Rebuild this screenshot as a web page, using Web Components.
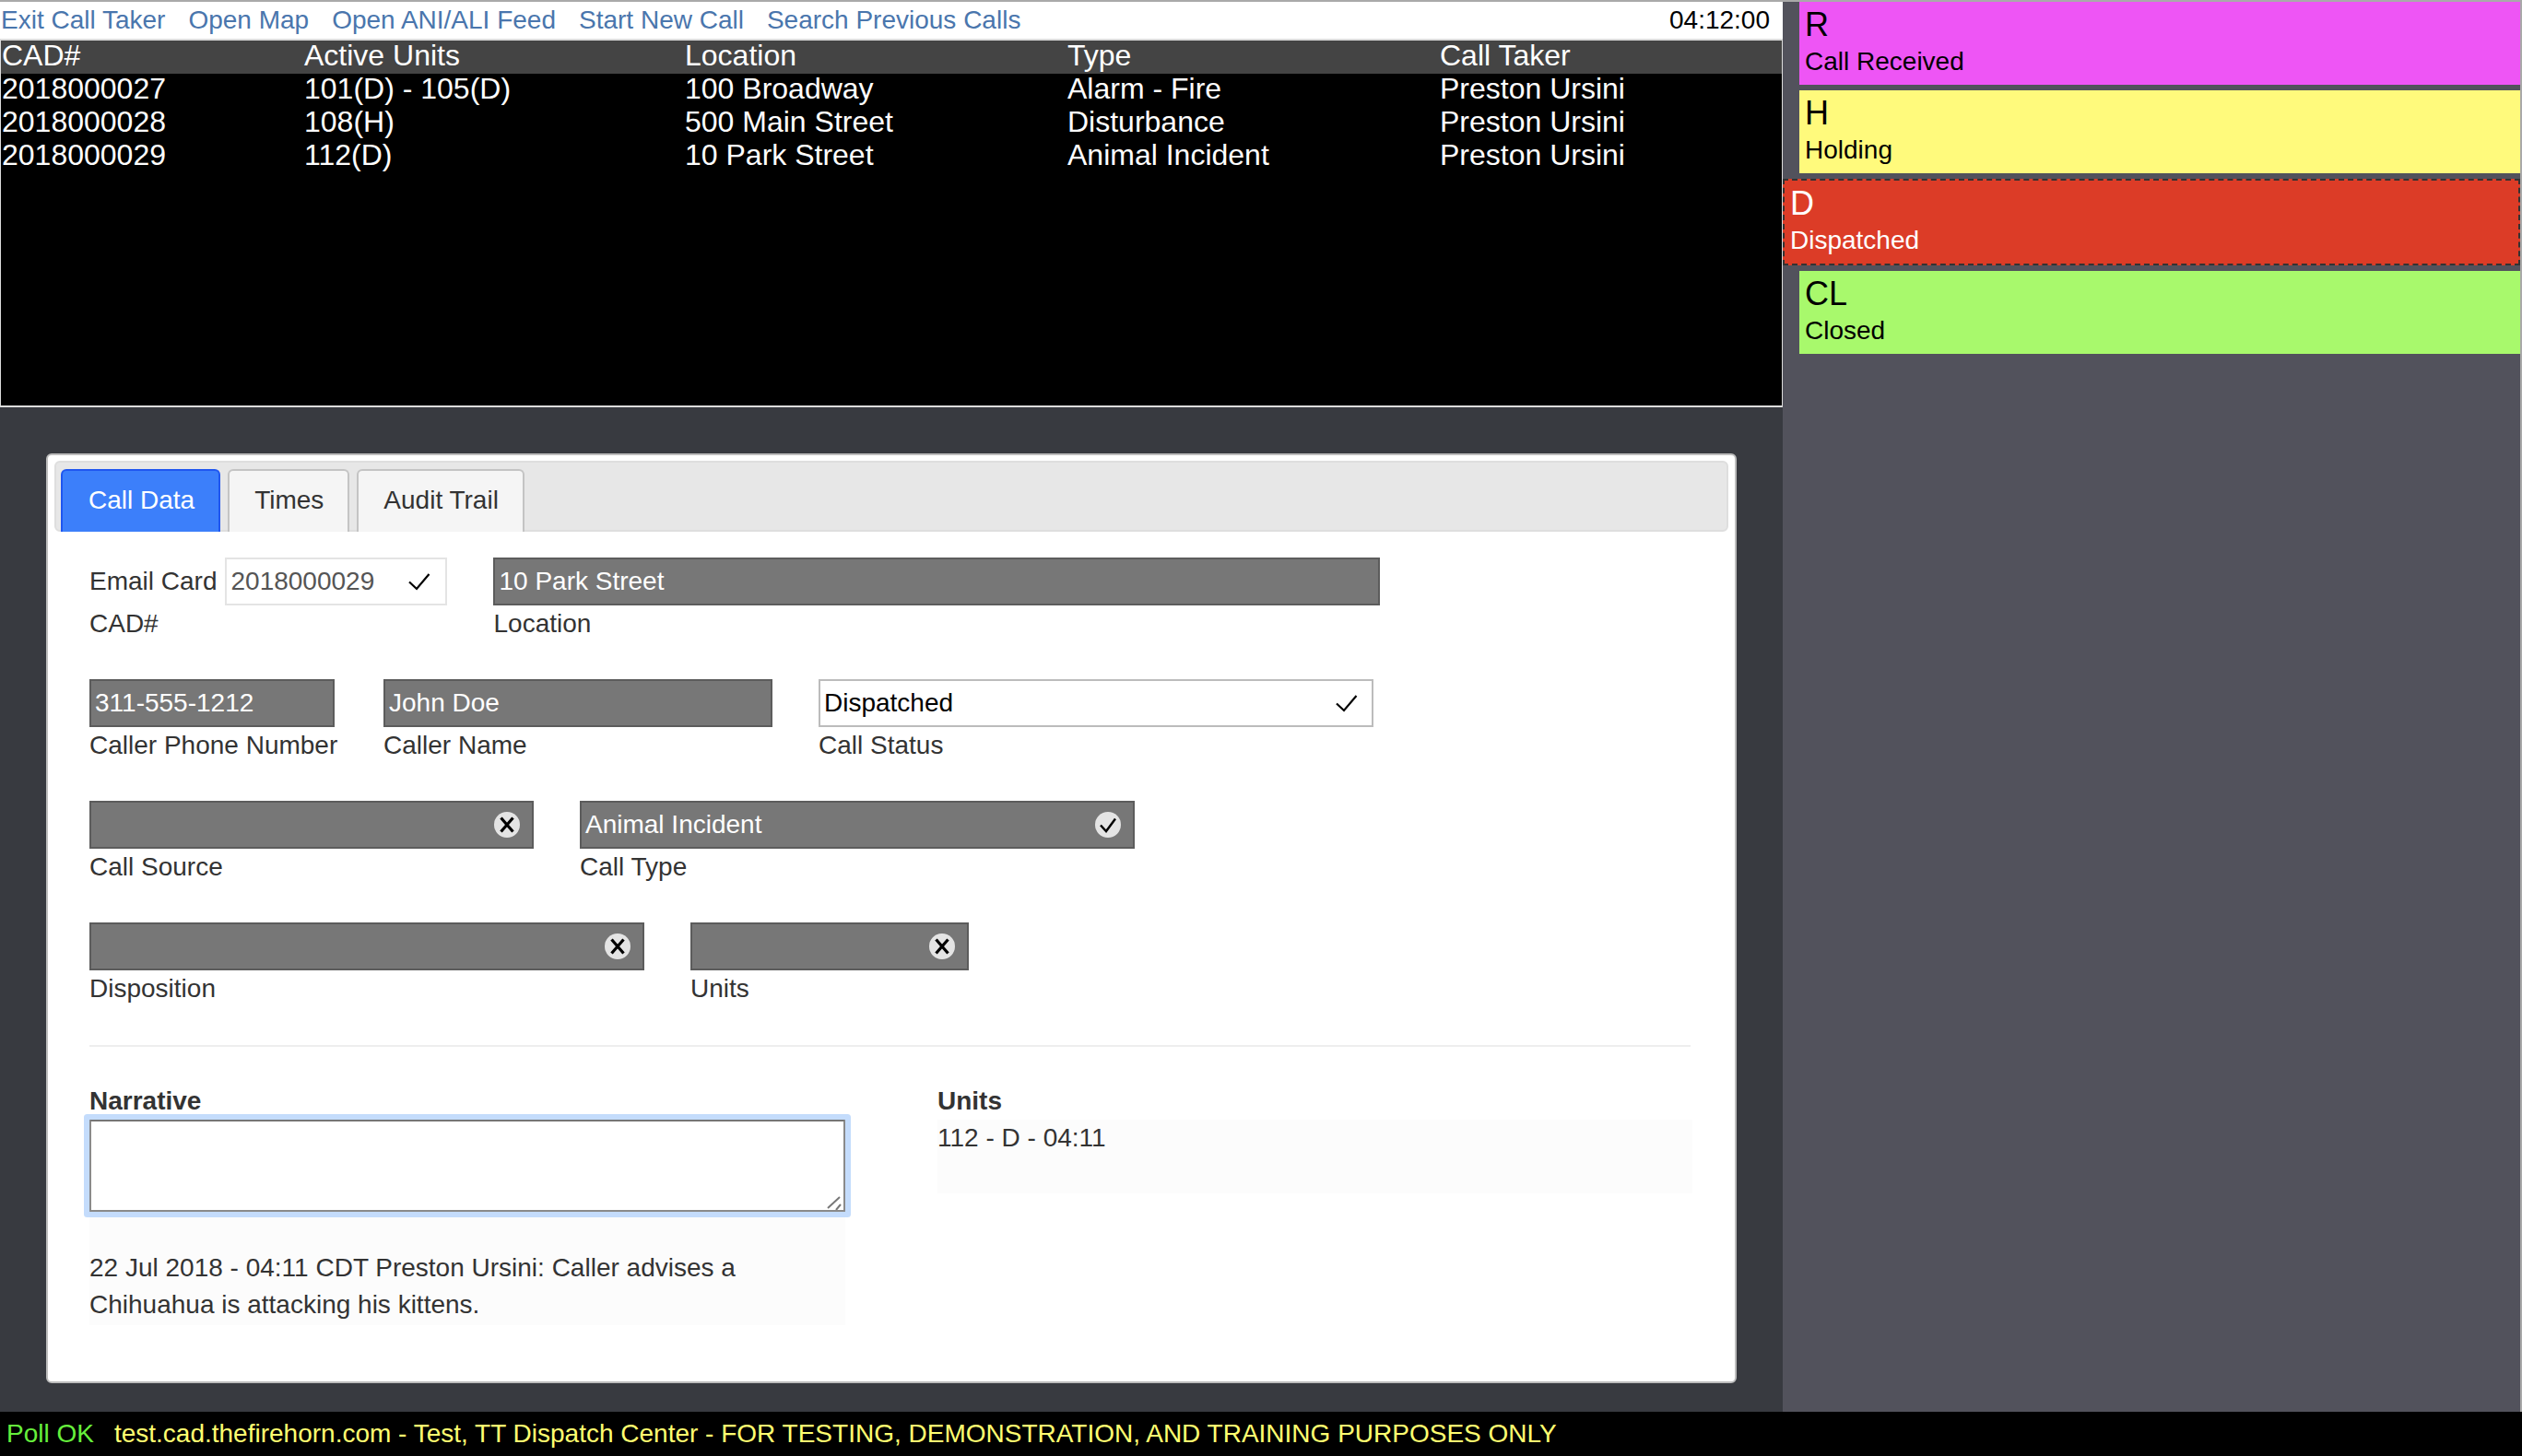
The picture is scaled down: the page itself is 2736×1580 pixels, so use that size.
<!DOCTYPE html>
<html lang="en">
<head>
<meta charset="utf-8">
<title>Call Taker</title>
<style>
  html, body { margin: 0; padding: 0; height: 100%; overflow: hidden; }
  body { font-family: "Liberation Sans", Arial, sans-serif; font-size: 28px; background: #383a40; }
</style>
</head>
<body>
<cad-shell>
  <call-board slot="board"></call-board>
  <call-card slot="main"></call-card>
  <status-card slot="side" code="R" name="Call Received" style="--bg:#ee55f5;--fg:#000"></status-card>
  <status-card slot="side" code="H" name="Holding" style="--bg:#fffa7c;--fg:#000"></status-card>
  <status-card slot="side" code="D" name="Dispatched" selected style="--bg:#dc3c27;--fg:#fff"></status-card>
  <status-card slot="side" code="CL" name="Closed" style="--bg:#a8f96c;--fg:#000"></status-card>
  <status-line slot="foot"></status-line>
</cad-shell>

<script>
const icons = {
  check: '<svg width="24" height="20" viewBox="0 0 24 20"><path d="M1 10.500 9 18 22.500 2" fill="none" stroke="#000" stroke-width="2.200"/></svg>',
  okay: '<svg width="28" height="28" viewBox="0 0 28 28"><circle cx="14" cy="14" r="14" fill="#e4e4e4"/><path d="M6 14.500 12 21 22 7.500" fill="none" stroke="#000" stroke-width="2.400"/></svg>',
  clear: '<svg width="28" height="28" viewBox="0 0 28 28"><circle cx="14" cy="14" r="14" fill="#e4e4e4"/><path d="M7.500 6.500 20.500 21.500M20.500 6.500 7.500 21.500" fill="none" stroke="#000" stroke-width="3.200"/></svg>'
};

class CadShell extends HTMLElement {
  constructor() {
    super();
    this.attachShadow({ mode: 'open' });
    this.shadowRoot.innerHTML = `
      <style>
        :host { display: grid; grid-template-columns: 1934px 1fr; grid-template-rows: 1530px 48px; height: 1580px; box-sizing: border-box; border-top: 2px solid #a9a9a9; }
        .left { display: flex; flex-direction: column; background: #383a40; min-width: 0; }
        .side { display: flex; flex-direction: column; gap: 6px; background: #52525c; border-right: 2px solid #a9a9a9; }
        .foot { grid-column: 1 / -1; }
      </style>
      <div class="left"><slot name="board"></slot><slot name="main"></slot></div>
      <div class="side"><slot name="side"></slot></div>
      <div class="foot"><slot name="foot"></slot></div>
    `;
  }
}

class CallBoard extends HTMLElement {
  constructor() {
    super();
    this.attachShadow({ mode: 'open' });
    const heads = ['CAD#', 'Active Units', 'Location', 'Type', 'Call Taker'];
    const calls = [
      ['2018000027', '101(D) - 105(D)', '100 Broadway', 'Alarm - Fire', 'Preston Ursini'],
      ['2018000028', '108(H)', '500 Main Street', 'Disturbance', 'Preston Ursini'],
      ['2018000029', '112(D)', '10 Park Street', 'Animal Incident', 'Preston Ursini']
    ];
    const links = ['Exit Call Taker', 'Open Map', 'Open ANI/ALI Feed', 'Start New Call', 'Search Previous Calls'];
    this.shadowRoot.innerHTML = `
      <style>
        :host { display: block; height: 440px; box-sizing: border-box; }
        nav { display: flex; align-items: center; gap: 25px; height: 40px; padding: 0 14px 0 1px; background: #fff; font-size: 28px; }
        a { color: #4a76ad; text-decoration: none; }
        time { margin-left: auto; color: #000; }
        .list { box-sizing: border-box; height: 400px; background: #000; border: solid #dcdcdc; border-width: 2px 1px 2px 1px; color: #fff; font-size: 32px; line-height: 33px; }
        .row { display: grid; grid-template-columns: 328px 413px 415px 404px 1fr; height: 36px; padding-left: 1px; }
        .head { background: #444; }
      </style>
      <nav>
        ${links.map(l => `<a href="#">${l}</a>`).join('')}
        <time>04:12:00</time>
      </nav>
      <div class="list">
        <div class="row head">${heads.map(h => `<span>${h}</span>`).join('')}</div>
        ${calls.map(c => `<div class="row">${c.map(v => `<span>${v}</span>`).join('')}</div>`).join('')}
      </div>
    `;
  }
}

class StatusCard extends HTMLElement {
  constructor() {
    super();
    this.attachShadow({ mode: 'open' });
    this.shadowRoot.innerHTML = `
      <style>
        :host { display: block; height: 90px; margin-left: 18px; padding: 5px 6px 0; box-sizing: border-box; background: var(--bg); color: var(--fg); }
        :host([selected]) { height: 94px; margin-left: 0; padding: 5px 6px 0; border: 2px dashed #333; }
        .code { font-size: 36px; line-height: 40px; }
        .name { font-size: 28px; line-height: 40px; }
      </style>
      <div class="code">${this.getAttribute('code')}</div>
      <div class="name">${this.getAttribute('name')}</div>
    `;
  }
}

class TabBar extends HTMLElement {
  constructor() {
    super();
    this.attachShadow({ mode: 'open' });
    this.shadowRoot.innerHTML = `
      <style>
        :host { display: flex; gap: 8px; height: 77px; box-sizing: border-box; padding: 7px 0 0 5px; background: #e7e7e7; border: 2px solid #dedede; border-radius: 6px; }
        div { box-sizing: border-box; height: 68px; padding: 0 26px 0 27px; line-height: 64px; background: #f5f5f5; color: #333; border: 2px solid #c4c4c4; border-bottom: 0; border-radius: 6px 6px 0 0; }
        .on { background: #3c7ffa; color: #fff; border-color: #1f56f0; padding-left: 28px; }
      </style>
      <div class="on">Call Data</div>
      <div>Times</div>
      <div>Audit Trail</div>
    `;
  }
}

// one labelled box of the form; kind is ro (grey, read only) or rw (white)
class FormField extends HTMLElement {
  constructor() {
    super();
    this.attachShadow({ mode: 'open' });
    const icon = this.getAttribute('icon');
    const prefix = this.getAttribute('prefix');
    this.shadowRoot.innerHTML = `
      <style>
        :host { display: block; font-size: 28px; line-height: 40px; color: #333; white-space: nowrap; }
        .top { display: flex; align-items: center; gap: 9px; }
        .box { display: flex; align-items: center; justify-content: space-between; box-sizing: border-box; height: 52px; width: var(--w); padding: 0 var(--pr, 13px) 0 4px; }
        .ro { background: #777; border: 2px solid #5c5c5c; color: #fff; }
        .rw { background: #fff; border: 2px solid #bcbcbc; color: #000; }
        .cad { background: #fff; border: 2px solid #e4e4e4; color: #555; }
        svg { display: block; }
      </style>
      <div class="top">
        ${prefix ? `<span>${prefix}</span>` : ''}
        <div class="box ${this.getAttribute('kind')}">
          <span>${this.getAttribute('value') || ''}</span>
          ${icon ? icons[icon] : ''}
        </div>
      </div>
      <div class="label">${this.getAttribute('label')}</div>
    `;
  }
}

class CallCard extends HTMLElement {
  constructor() {
    super();
    this.attachShadow({ mode: 'open' });
    this.shadowRoot.innerHTML = `
      <style>
        :host { display: block; box-sizing: border-box; height: 1009px; margin: 50px 50px 0; padding: 6px 7px 0; background: #fff; border: 2px solid #bdbdbd; border-radius: 6px; color: #333; line-height: 40px; }
        .form { display: flex; flex-direction: column; gap: 40px; margin: 28px 41px 0 38px; }
        .line { display: flex; gap: 50px; }
        hr { height: 2px; margin: 41px 0 0; border: 0; background: #eee; }
        .notes { display: grid; grid-template-columns: 820px 819px; column-gap: 100px; margin-top: 39px; }
        b { display: block; }
        .entry { position: relative; height: 100px; }
        .entry svg { position: absolute; right: 2px; bottom: 2px; }
        textarea { display: block; box-sizing: border-box; width: 820px; height: 100px; margin: 0; padding: 0; background: #fff; border: 2px solid #8a8a8a; border-top-color: #767676; border-radius: 1px; outline: 0; resize: none; box-shadow: 0 0 0 6px #c4dcfc; }
        .log { box-sizing: border-box; height: 120px; margin-top: 3px; padding-top: 38px; background: #fcfcfc; }
        .units { height: 80px; background: #fcfcfc; }
      </style>
      <tab-bar></tab-bar>
      <div class="form">
        <div class="line">
          <form-field prefix="Email Card" kind="cad" value="2018000029" label="CAD#" icon="check" style="--w:241px;--pr:16px"></form-field>
          <form-field kind="ro" value="10 Park Street" label="Location" style="--w:962px"></form-field>
        </div>
        <div class="line">
          <form-field kind="ro" value="311-555-1212" label="Caller Phone Number" style="--w:266px;width:269px"></form-field>
          <form-field kind="ro" value="John Doe" label="Caller Name" style="--w:422px"></form-field>
          <form-field kind="rw" value="Dispatched" label="Call Status" icon="check" style="--w:602px;--pr:15px"></form-field>
        </div>
        <div class="line">
          <form-field kind="ro" label="Call Source" icon="clear" style="--w:482px"></form-field>
          <form-field kind="ro" value="Animal Incident" label="Call Type" icon="okay" style="--w:602px"></form-field>
        </div>
        <div class="line">
          <form-field kind="ro" label="Disposition" icon="clear" style="--w:602px"></form-field>
          <form-field kind="ro" label="Units" icon="clear" style="--w:302px"></form-field>
        </div>
      </div>
      <div style="margin: 0 41px 0 38px">
        <hr>
        <div class="notes">
          <div>
            <b>Narrative</b>
            <div class="entry">
              <textarea></textarea>
              <svg width="20" height="20" viewBox="0 0 20 20"><path d="M3 18 16 6M12 20 17 14" fill="none" stroke="#777" stroke-width="2"/></svg>
            </div>
            <div class="log">22 Jul 2018 - 04:11 CDT Preston Ursini: Caller advises a Chihuahua is attacking his kittens.</div>
          </div>
          <div>
            <b>Units</b>
            <div class="units">112 - D - 04:11</div>
          </div>
        </div>
      </div>
    `;
  }
}

class StatusLine extends HTMLElement {
  constructor() {
    super();
    this.attachShadow({ mode: 'open' });
    this.shadowRoot.innerHTML = `
      <style>
        :host { display: flex; align-items: center; gap: 22px; height: 48px; padding-left: 7px; background: #000; color: #ffff70; font-size: 28px; white-space: nowrap; }
        .ok { color: #66f03c; }
      </style>
      <span class="ok">Poll OK</span>
      <span>test.cad.thefirehorn.com - Test, TT Dispatch Center - FOR TESTING, DEMONSTRATION, AND TRAINING PURPOSES ONLY</span>
    `;
  }
}

customElements.define('cad-shell', CadShell);
customElements.define('call-board', CallBoard);
customElements.define('status-card', StatusCard);
customElements.define('tab-bar', TabBar);
customElements.define('form-field', FormField);
customElements.define('call-card', CallCard);
customElements.define('status-line', StatusLine);
</script>
</body>
</html>
